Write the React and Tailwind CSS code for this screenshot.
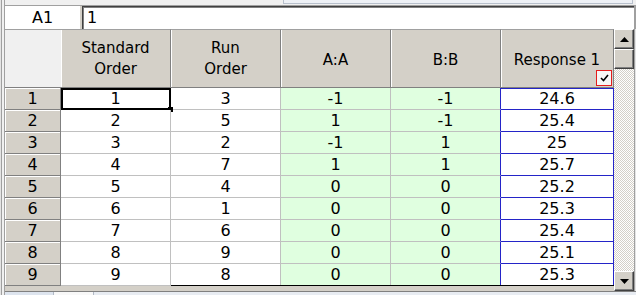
const rows = [
  [1, 3, '-1', '-1', '24.6'],
  [2, 5, '1', '-1', '25.4'],
  [3, 2, '-1', '1', '25'],
  [4, 7, '1', '1', '25.7'],
  [5, 4, '0', '0', '25.2'],
  [6, 1, '0', '0', '25.3'],
  [7, 6, '0', '0', '25.4'],
  [8, 9, '0', '0', '25.1'],
  [9, 8, '0', '0', '25.3'],
];

const headCell =
  'flex h-[58px] flex-col items-center justify-center border-r border-t border-[#808080] border-t-[#a0a0a0] bg-[#d4d0c8] leading-[21px] shadow-[inset_1px_0_0_#ffffff]';

const cell = 'flex h-[22px] items-center justify-center border-b border-r text-[16px]';

function ScrollButton({ up }) {
  return (
    <div className="flex h-[20px] items-center justify-center border border-t-white border-l-white border-r-[#404040] border-b-[#404040] bg-[#d4d0c8] shadow-[inset_-1px_-1px_0_#808080]">
      <svg width="9" height="5" viewBox="0 0 9 5">
        <polygon points={up ? '4.5,0 9,5 0,5' : '0,0 9,0 4.5,5'} fill="#000" />
      </svg>
    </div>
  );
}

export default function App() {
  return (
    <div className="flex h-[295px] w-[636px] overflow-hidden bg-[#f0f0f0] font-['DejaVu_Sans',sans-serif] text-[15px] text-black">
      {/* left frame */}
      <div className="flex w-[5px] shrink-0">
        <div className="w-px bg-[#e4e4e4]" />
        <div className="w-px bg-[#a0a0a0]" />
        <div className="w-[2px] bg-[#f0f0f0]" />
        <div className="w-px bg-[#a0a0a0]" />
      </div>

      <div className="flex flex-1 flex-col">
        {/* top strip */}
        <div className="flex h-[6px] border-b border-[#a0a0a0]">
          <div className="ml-[278px] h-[4px] w-[350px] border-b border-l border-r border-[#b8c0cc] bg-[#eef1f6]" />
        </div>

        {/* name box + formula */}
        <div className="flex h-[23px]">
          <div className="flex w-[75px] items-center justify-center bg-white text-[16px]">A1</div>
          <div className="w-[2px] bg-[#d4d0c8]" />
          <div className="flex flex-1 items-center border-l border-t border-[#404040] bg-white pl-[4px] text-[16px] shadow-[inset_1px_1px_0_#808080]">
            1
          </div>
          <div className="w-[2px] bg-[#a0a0a0]" />
        </div>

        <div className="flex flex-1">
          <div className="flex w-[609px] flex-col">
            <div className="grid grid-cols-[56px_110px_110px_110px_110px_113px] border-b border-[#808080]">
              <div className="border-t border-[#a0a0a0]" />
              <div className={headCell}>
                <span>Standard</span>
                <span>Order</span>
              </div>
              <div className={headCell}>
                <span>Run</span>
                <span>Order</span>
              </div>
              <div className={`${headCell} pt-[3px]`}>A:A</div>
              <div className={`${headCell} pt-[3px]`}>B:B</div>
              <div className={`${headCell} relative pt-[3px]`}>
                Response 1
                <div className="absolute bottom-[1px] right-[1px] flex h-[16px] w-[16px] bg-[#e41c1c] p-px">
                  <div className="flex flex-1 items-center justify-center bg-[#f6f6f6]">
                    <svg width="9" height="8" viewBox="0 0 9 8">
                      <path d="M1 4 L3.5 6.5 L8 1" stroke="#000" strokeWidth="1.6" fill="none" />
                    </svg>
                  </div>
                </div>
              </div>
            </div>

            <div className="grid grid-cols-[56px_110px_110px_110px_110px_113px]">
              {rows.map((r, i) => (
                <div key={i} className="contents">
                  <div className={`${cell} border-[#808080] bg-[#d4d0c8] shadow-[inset_1px_1px_0_#ffffff]`}>
                    {i + 1}
                  </div>
                  <div className={`${cell} relative border-[#c0c0c0] bg-white`}>
                    {r[0]}
                    {i === 0 && (
                      <>
                        <div className="absolute -bottom-px -right-px left-0 top-0 border-2 border-black" />
                        <div className="absolute -bottom-[3px] -right-[3px] h-[5px] w-[5px] bg-black" />
                      </>
                    )}
                  </div>
                  <div className={`${cell} border-[#c0c0c0] bg-white`}>{r[1]}</div>
                  <div className={`${cell} border-[#c0c0c0] bg-[#e0ffe0]`}>{r[2]}</div>
                  <div className={`${cell} border-[#c0c0c0] border-r-[#2424c8] bg-[#e0ffe0]`}>{r[3]}</div>
                  <div
                    className={`${cell} border-[#2424c8] bg-white ${
                      i === 0 ? 'shadow-[inset_0_1px_0_#2424c8]' : ''
                    }`}
                  >
                    {r[4]}
                  </div>
                </div>
              ))}
            </div>
            <div className="-mt-px ml-[56px] h-px bg-black" />
            <div className="flex-1 bg-[#d4d0c8]" />
          </div>

          {/* vertical scrollbar */}
          <div className="flex w-[20px] flex-col">
            <ScrollButton up />
            <div className="h-[20px] border border-t-white border-l-white border-r-[#404040] border-b-[#404040] bg-[#d4d0c8] shadow-[inset_-1px_-1px_0_#808080]" />
            <div className="flex-1 bg-[repeating-conic-gradient(#d4d0c8_0%_25%,#ffffff_0%_50%)] bg-size-[2px_2px]" />
            <ScrollButton />
          </div>
          <div className="flex w-[2px]">
            <div className="w-px bg-[#a0a0a0]" />
            <div className="w-px bg-[#e4e4e4]" />
          </div>
        </div>

        {/* bottom edge */}
        <div className="h-px bg-[#808080]" />
        <div className="flex h-[3px]">
          <div className="w-[48px] bg-[#dde4ee]" />
          <div className="w-[40px] border-l border-[#b0b8c4] bg-[#f8f8f8]" />
          <div className="flex-1 border-l border-[#b0b8c4] bg-[#e8ecf2]" />
        </div>
      </div>
    </div>
  );
}
